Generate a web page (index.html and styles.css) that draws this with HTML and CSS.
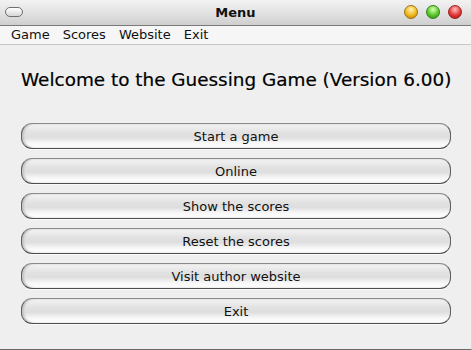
FILE: index.html
```html
<!DOCTYPE html>
<html lang="en">
<head>
    <meta charset="UTF-8">
    <title>Menu</title>
    <link rel="stylesheet" href="styles.css">
</head>
<body>
    <div class="window">
        <div class="titlebar">
            <span class="shade"></span>
            <span class="title">Menu</span>
            <div class="lights">
                <span class="light yellow"></span>
                <span class="light green"></span>
                <span class="light red"></span>
            </div>
        </div>
        <div class="menubar">
            <span class="menu-item">Game</span>
            <span class="menu-item">Scores</span>
            <span class="menu-item">Website</span>
            <span class="menu-item">Exit</span>
        </div>
        <div class="content">
            <h1>Welcome to the Guessing Game (Version 6.00)</h1>
            <div class="buttons">
                <button class="pill">Start a game</button>
                <button class="pill">Online</button>
                <button class="pill">Show the scores</button>
                <button class="pill">Reset the scores</button>
                <button class="pill">Visit author website</button>
                <button class="pill">Exit</button>
            </div>
        </div>
    </div>
</body>
</html>
```

FILE: styles.css
```css
body {
    margin: 0;
    font-family: "DejaVu Sans", sans-serif;
    background: #efefef;
}
.window {
    width: 472px;
    height: 350px;
    box-sizing: border-box;
    background: #efefef;
    border-bottom: 1px solid #6a6a6a;
    border-right: 1px solid #d8d8d8;
    display: flex;
    flex-direction: column;
}
.titlebar {
    position: relative;
    height: 25px;
    border-bottom: 1px solid #7a7a7a;
    background: linear-gradient(#f2f2f2, #e4e4e4 45%, #cfcfcf);
    display: flex;
    align-items: center;
    justify-content: center;
}
.shade {
    position: absolute;
    left: 5px;
    top: 7px;
    width: 16px;
    height: 8px;
    border: 1px solid #6e6e6e;
    border-radius: 5px;
    background: linear-gradient(#ffffff, #d6d6d6);
}
.title {
    font-size: 13px;
    font-weight: bold;
    color: #111;
    margin-top: -1px;
}
.lights {
    position: absolute;
    right: 9px;
    top: 5px;
    display: flex;
    gap: 8px;
}
.light {
    width: 14px;
    height: 14px;
    border-radius: 50%;
    box-sizing: border-box;
}
.yellow {
    background: radial-gradient(circle at 50% 30%, #fff4b0, #f0b820 55%, #b07a00);
    border: 1px solid #a07010;
}
.green {
    background: radial-gradient(circle at 50% 30%, #d8ffb0, #58c82a 55%, #2a8010);
    border: 1px solid #3a8020;
}
.red {
    background: radial-gradient(circle at 50% 30%, #ffc0c0, #e03838 55%, #a01010);
    border: 1px solid #a02020;
}
.menubar {
    height: 18px;
    background: #f6f6f6;
    border-bottom: 1px solid #c8c8c8;
    display: flex;
    gap: 13px;
    padding-left: 11px;
    font-size: 13px;
    line-height: 18px;
    color: #111;
}
.content {
    padding: 24px 21px 0 21px;
}
h1 {
    margin: 0;
    font-size: 18.4px;
    font-weight: normal;
    color: #000;
    line-height: 22px;
    text-align: center;
    white-space: nowrap;
    -webkit-text-stroke: 0.2px #000;
}
.buttons {
    margin-top: 32px;
    display: flex;
    flex-direction: column;
    gap: 9px;
}
.pill {
    height: 26px;
    width: 430px;
    border: 1px solid #777;
    border-color: #8a8a8a #5e5e5e #4e4e4e #5e5e5e;
    border-radius: 11px;
    background: linear-gradient(#f4f4f4, #e2e2e2 35%, #dedede 55%, #f8f8f8 80%, #ffffff);
    box-shadow: inset 2px 0 2px #c4c4c4, 0 1px 0 #fafafa;
    font-family: "DejaVu Sans", sans-serif;
    font-size: 13px;
    color: #111;
    padding: 0;
}
```
